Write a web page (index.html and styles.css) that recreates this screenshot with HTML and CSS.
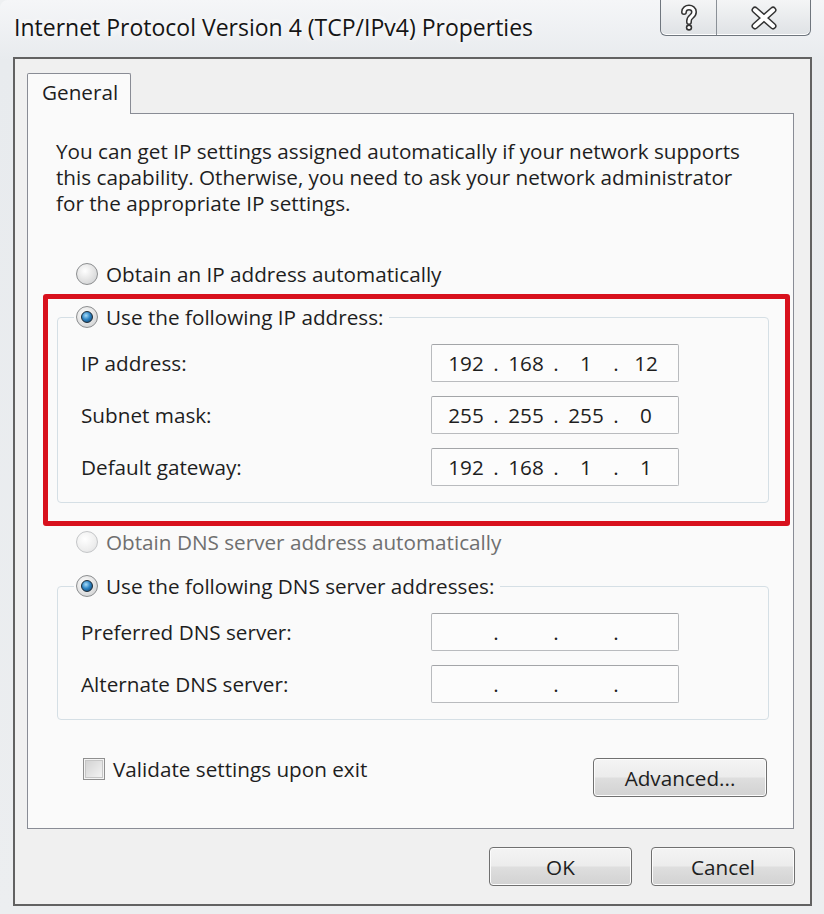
FILE: index.html
```html
<!DOCTYPE html>
<html lang="en">
<head>
    <meta charset="UTF-8">
    <title>Internet Protocol Version 4 (TCP/IPv4) Properties</title>
    <link rel="stylesheet" href="styles.css">
</head>
<body>
<div class="window">
    <div class="titlebar">
        <div class="title">Internet Protocol Version 4 (TCP/IPv4) Properties</div>
        <div class="caption-buttons">
            <div class="cap-btn help">
                <svg width="22" height="28" viewBox="0 0 22 28">
                    <path d="M6 8 C6 2 16 2 16 8 C16 13 11 12 11 17 L11 18" fill="none" stroke="#333" stroke-width="6" stroke-linecap="round"/>
                    <circle cx="11" cy="23.5" r="3.2" fill="#333"/>
                    <path d="M6 8 C6 2 16 2 16 8 C16 13 11 12 11 17 L11 18" fill="none" stroke="#fff" stroke-width="3" stroke-linecap="round"/>
                    <circle cx="11" cy="23.5" r="1.6" fill="#fff"/>
                </svg>
            </div>
            <div class="cap-btn close">
                <svg width="30" height="24" viewBox="0 0 30 24">
                    <path d="M6 4 L24 20 M24 4 L6 20" fill="none" stroke="#333" stroke-width="7" stroke-linecap="round"/>
                    <path d="M6 4 L24 20 M24 4 L6 20" fill="none" stroke="#fff" stroke-width="4" stroke-linecap="round"/>
                </svg>
            </div>
        </div>
    </div>

    <div class="client">
        <div class="tabs">
            <div class="tab">General</div>
        </div>

        <div class="panel">
            <p class="intro">You can get IP settings assigned automatically if your network supports<br>
                this capability. Otherwise, you need to ask your network administrator<br>
                for the appropriate IP settings.</p>

            <div class="option"><span class="radio"></span>Obtain an IP address automatically</div>

            <div class="highlight">
                <fieldset class="group">
                    <legend class="option"><span class="radio on"></span>Use the following IP address:</legend>
                    <div class="rows">
                        <div class="row">
                            <span class="label">IP address:</span>
                            <div class="ip"><span>192</span><i>.</i><span>168</span><i>.</i><span>1</span><i>.</i><span>12</span></div>
                        </div>
                        <div class="row">
                            <span class="label">Subnet mask:</span>
                            <div class="ip"><span>255</span><i>.</i><span>255</span><i>.</i><span>255</span><i>.</i><span>0</span></div>
                        </div>
                        <div class="row">
                            <span class="label">Default gateway:</span>
                            <div class="ip"><span>192</span><i>.</i><span>168</span><i>.</i><span>1</span><i>.</i><span>1</span></div>
                        </div>
                    </div>
                </fieldset>
            </div>

            <div class="option disabled"><span class="radio"></span>Obtain DNS server address automatically</div>

            <fieldset class="group dns">
                <legend class="option"><span class="radio on"></span>Use the following DNS server addresses:</legend>
                <div class="rows">
                    <div class="row">
                        <span class="label">Preferred DNS server:</span>
                        <div class="ip"><span></span><i>.</i><span></span><i>.</i><span></span><i>.</i><span></span></div>
                    </div>
                    <div class="row">
                        <span class="label">Alternate DNS server:</span>
                        <div class="ip"><span></span><i>.</i><span></span><i>.</i><span></span><i>.</i><span></span></div>
                    </div>
                </div>
            </fieldset>

            <div class="bottom-row">
                <div class="check"><span class="box"></span>Validate settings upon exit</div>
                <div class="btn advanced">Advanced...</div>
            </div>
        </div>

        <div class="footer">
            <div class="btn ok">OK</div>
            <div class="btn cancel">Cancel</div>
        </div>
    </div>
</div>
</body>
</html>
```

FILE: styles.css
```css
body {
    margin: 0;
    padding: 0;
    background: #eef0f2;
    font-family: 'Open Sans', sans-serif;
    font-size: 20.7px;
    color: #1e1e1e;
}

.window {
    width: 824px;
    height: 914px;
    background: linear-gradient(to bottom, #f5f6f8 0%, #e8ebee 60px, #eceef0 100%);
    border-top-left-radius: 8px;
    overflow: hidden;
}

/* title bar */
.titlebar {
    height: 57px;
    display: flex;
    justify-content: space-between;
    align-items: flex-start;
}
.title {
    padding: 15px 0 0 14px;
    font-size: 23px;
    line-height: 24px;
    color: #151515;
    text-shadow: 0 0 8px #fff, 0 0 8px #fff;
}
.caption-buttons {
    display: flex;
    margin-right: 13px;
    height: 35px;
    border: 1px solid #6f767e;
    border-top: none;
    border-radius: 0 0 6px 6px;
    background: linear-gradient(to bottom, #f4f5f6, #dfe2e5);
    box-shadow: inset 0 -1px 0 #fff;
}
.cap-btn {
    display: flex;
    justify-content: center;
    align-items: center;
}
.cap-btn.help {
    width: 55px;
    border-right: 1px solid #8a9097;
}
.cap-btn.close {
    width: 93px;
}

/* client area */
.client {
    margin-left: 13px;
    width: 799px;
    height: 849px;
    box-sizing: border-box;
    border: 2px solid #626262;
    background: #f0f0f0;
}
.tabs {
    padding: 14px 0 0 12px;
    display: flex;
}
.tab {
    position: relative;
    z-index: 1;
    width: 104px;
    height: 41px;
    box-sizing: border-box;
    margin-bottom: -1px;
    padding-left: 14px;
    border: 1px solid #898c95;
    border-bottom: none;
    border-radius: 2px 2px 0 0;
    background: #fafafa;
    line-height: 37px;
}
.panel {
    margin-left: 12px;
    width: 767px;
    height: 716px;
    box-sizing: border-box;
    border: 1px solid #898c95;
    background: #fafafa;
}
.intro {
    margin: 24px 0 0 28px;
    line-height: 26px;
}

/* radio options */
.option {
    display: flex;
    align-items: center;
    gap: 8px;
    height: 26px;
    margin: 45px 0 0 48px;
}
.option.disabled {
    margin-top: 3px;
    color: #6f6f6f;
}
.radio {
    position: relative;
    width: 20px;
    height: 20px;
    border: 1px solid #8c8e90;
    border-radius: 50%;
    background: radial-gradient(circle at 40% 35%, #ffffff 0%, #e7e7e7 45%, #c9cbcd 100%);
}
.option.disabled .radio {
    border-color: #c4c6c8;
    background: radial-gradient(circle at 40% 35%, #ffffff 0%, #eeeeee 60%, #dcdddf 100%);
}
.radio.on::after {
    content: '';
    position: absolute;
    left: 4px;
    top: 4px;
    width: 10px;
    height: 10px;
    border: 1px solid #1c2a36;
    border-radius: 50%;
    background: radial-gradient(circle at 40% 35%, #a7dcf9 0%, #2f86c6 45%, #0c3b63 100%);
}

/* group boxes */
.highlight {
    margin: 7px 0 0 15px;
    width: 747px;
    box-sizing: border-box;
    padding: 5px 16px 18px 9px;
    border: 5px solid #d8111d;
    border-radius: 3px;
}
.group {
    margin: 0;
    padding: 0;
    width: 712px;
    box-sizing: border-box;
    border: 1px solid #d5dfe5;
    border-radius: 4px;
}
.group legend {
    margin: 0 0 0 16px;
    padding: 0 6px 0 2px;
    gap: 8px;
    background: #fafafa;
}
.group.dns {
    margin: 18px 0 0 29px;
}
.rows {
    padding: 14px 0 16px 23px;
}
.row {
    display: flex;
    align-items: center;
    height: 38px;
    margin-bottom: 14px;
}
.row:last-child {
    margin-bottom: 0;
}
.label {
    width: 350px;
}
.ip {
    display: flex;
    align-items: center;
    width: 248px;
    height: 38px;
    box-sizing: border-box;
    padding-left: 9px;
    border: 1px solid #b9bbbe;
    border-top-color: #a3a5a8;
    border-radius: 2px;
    background: #fcfcfc;
}
.ip span {
    width: 50px;
    text-align: center;
}
.ip i {
    width: 10px;
    font-style: normal;
    text-align: center;
}

/* checkbox + buttons */
.bottom-row {
    display: flex;
    align-items: flex-start;
    margin-top: 38px;
}
.check {
    display: flex;
    align-items: center;
    gap: 8px;
    height: 22px;
    margin: 0 0 0 55px;
}
.box {
    width: 20px;
    height: 20px;
    border: 1px solid #8f8f8f;
    box-shadow: inset 0 0 0 1px #f4f4f4, inset 0 0 0 2px #c6c6c6;
    background: linear-gradient(135deg, #cfcfcf, #f7f7f7);
}
.btn {
    display: flex;
    justify-content: center;
    align-items: center;
    height: 39px;
    box-sizing: border-box;
    border: 1px solid #707070;
    border-radius: 4px;
    background: linear-gradient(to bottom, #f4f4f4 0%, #ececec 48%, #dedede 52%, #d2d2d2 100%);
    box-shadow: inset 0 0 0 1px #fcfcfc;
}
.btn.advanced {
    width: 174px;
    margin: 0 26px 0 auto;
}
.footer {
    display: flex;
    justify-content: flex-end;
    gap: 19px;
    padding: 18px 15px 0 0;
}
.btn.ok {
    width: 143px;
}
.btn.cancel {
    width: 144px;
}
```
